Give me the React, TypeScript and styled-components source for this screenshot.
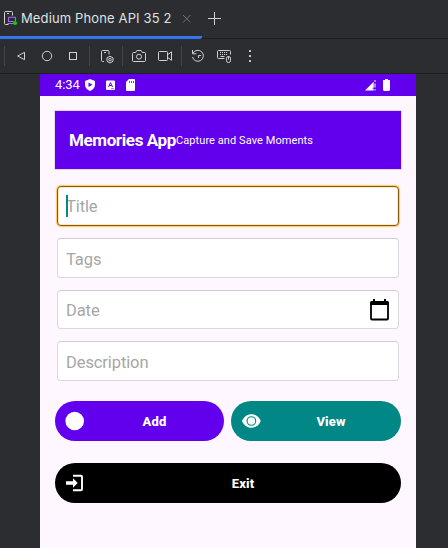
import React from "react";
import styled, { createGlobalStyle } from "styled-components";

const GlobalStyle = createGlobalStyle`
  * { box-sizing: border-box; }
  body { margin: 0; background: #2b2d30; font-family: Roboto, sans-serif; overflow: hidden; }
  button, input { font-family: inherit; }
`;

const Emulator = styled.div`
  width: 448px;
  height: 548px;
  display: flex;
  flex-direction: column;
  background: #2b2d30;
  overflow: hidden;
`;

const TabBar = styled.header`
  height: 39px;
  flex: none;
  display: flex;
  box-shadow: inset 0 -1px #1e1f22;
`;

const Tab = styled.div`
  width: 202px;
  height: 39px;
  padding: 0 0 1px 3px;
  display: flex;
  align-items: center;
  border-bottom: 3px solid #3574f0;
  border-bottom-right-radius: 2px;
`;

const TabTitle = styled.span`
  width: 161px;
  margin-left: 2px;
  font: 400 13px/20px Inter, sans-serif;
  letter-spacing: 0.13px;
  color: #dfe1e5;
  white-space: nowrap;
`;

const NewTab = styled.div`
  padding: 10px 0 0 5px;
`;

const Toolbar = styled.div`
  height: 35px;
  flex: none;
  display: flex;
  align-items: center;
  border-bottom: 1px solid #1e1f22;
`;

const Tool = styled.div`
  width: 26px;
  height: 26px;
  display: grid;
  place-items: center;
`;

const Separator = styled.div<{ $before: number; $after: number }>`
  width: 1px;
  height: 20px;
  margin: 0 ${(p) => p.$after}px 0 ${(p) => p.$before}px;
  background: #43454a;
`;

const Screen = styled.main`
  width: 376px;
  flex: 1;
  margin-left: 40px;
  background: #fef7ff;
`;

const StatusBar = styled.div`
  height: 22px;
  padding: 0 25px 0 15px;
  display: flex;
  align-items: center;
  background: #6200ee;
  color: #fff;
`;

const Clock = styled.span`
  width: 28px;
  font-size: 13px;
  line-height: 22px;
  letter-spacing: -0.1px;
`;

const StatusIcons = styled.div<{ $end?: boolean }>`
  display: flex;
  align-items: center;
  gap: ${(p) => (p.$end ? 5 : 8)}px;
  margin-left: ${(p) => (p.$end ? "auto" : "1px")};
`;

const Content = styled.div`
  padding: 15px 15px 0;
`;

const Banner = styled.section`
  height: 58px;
  padding: 0 0 0 14px;
  display: flex;
  align-items: center;
  background: #6200ee;
  color: #fff;
  box-shadow: 0 0 0 1px rgba(98, 60, 160, 0.16);
`;

const AppName = styled.h1`
  width: 107px;
  margin: 0;
  font-size: 17px;
  font-weight: 700;
  letter-spacing: -0.38px;
  white-space: nowrap;
`;

const Tagline = styled.span`
  font-size: 11px;
  letter-spacing: 0.08px;
  white-space: nowrap;
`;

const Fields = styled.form`
  padding: 17px 2px 0;
  display: grid;
  grid-template-rows: 40px 40px 39px 40px;
  row-gap: 12px;
`;

const Field = styled.label<{ $focused?: boolean; $short?: boolean }>`
  height: ${(p) => (p.$short ? 39 : 40)}px;
  padding: 0 9px 0 8px;
  display: flex;
  align-items: center;
  background: #fff;
  border: 1px solid ${(p) => (p.$focused ? "#865a0c" : "#dbd7de")};
  border-top-color: ${(p) => (p.$focused ? "#865a0c" : "#cfcbd2")};
  border-radius: 4px;
  box-shadow: ${(p) => (p.$focused ? "0 0 1px 1px #ffc860, inset 0 0 0 1px #ffe9c0" : "none")};
`;

const Caret = styled.i`
  width: 2px;
  height: 22px;
  margin-right: -2px;
  background: #008c83;
  z-index: 1;
`;

const Input = styled.input<{ $raised?: boolean }>`
  flex: 1;
  min-width: 0;
  height: 30px;
  padding: ${(p) => (p.$raised ? 0 : 2)}px 0 0;
  border: 0;
  outline: 0;
  background: transparent;
  font-size: 16.5px;
  letter-spacing: -0.1px;
  &::placeholder { color: #a6a6a6; opacity: 1; }
`;

const Actions = styled.div`
  margin-top: 20px;
  display: grid;
  grid-template-columns: 169px 170px;
  gap: 22px 7px;
`;

const ActionButton = styled.button<{ $color: string; $wide?: boolean }>`
  height: 40px;
  grid-column: ${(p) => (p.$wide ? "1 / -1" : "auto")};
  padding: 0 10px;
  display: flex;
  align-items: center;
  border: 0;
  border-radius: 20px;
  background: ${(p) => p.$color};
  color: #fff;
`;

const ActionLabel = styled.span`
  flex: 1;
  padding: 1px 0 0 10px;
  font-size: 13px;
  font-weight: 800;
  letter-spacing: 0.15px;
`;

const stroke = { fill: "none", stroke: "#ced0d6", strokeWidth: 1 };

function App() {
  return (
    <Emulator>
      <GlobalStyle />
      <TabBar>
        <Tab>
          <svg width="16" height="16" viewBox="0 0 16 16" fill="none">
            <path d="M5.5 14.5h-3a1 1 0 0 1-1-1v-11a1 1 0 0 1 1-1h6a1 1 0 0 1 1 1v3" stroke="#ced0d6" />
            <path d="M4 3.5h2" stroke="#ced0d6" />
            <path d="M12.5 11V8a.8.8 0 0 0-.8-.8H6.3a.8.8 0 0 0-.8.8v3.5h5M4.5 13.5h6" stroke="#a571e6" strokeWidth="1.1" />
            <circle cx="12" cy="13" r="2" fill="#00d900" />
          </svg>
          <TabTitle>Medium Phone API 35 2</TabTitle>
          <svg width="10" height="10" viewBox="0 0 10 10" stroke="#6f737a" fill="none">
            <path d="M1 2l7.500 7.500M8.500 2L1 9.500" />
          </svg>
        </Tab>
        <NewTab>
          <svg width="14" height="14" viewBox="0 0 14 14" stroke="#ced0d6" fill="none">
            <path d="M7.5 1v13M1 7.5h13" />
          </svg>
        </NewTab>
      </TabBar>

      <Toolbar>
        <Separator $before={4} $after={3} />
        <Tool><svg width="16" height="16" {...stroke}><path d="M11.5 4.3v7.4L4.6 8z" strokeLinejoin="round" /></svg></Tool>
        <Tool><svg width="16" height="16" {...stroke}><circle cx="8" cy="8" r="4.7" /></svg></Tool>
        <Tool><svg width="16" height="16" {...stroke}><rect x="4.5" y="4.5" width="7" height="7" /></svg></Tool>
        <Separator $before={3} $after={4} />
        <Tool>
          <svg width="16" height="16" {...stroke}>
            <path d="M5 13.5H3.5a1 1 0 0 1-1-1v-9a1 1 0 0 1 1-1H9a1 1 0 0 1 1 1v3M5 4.5h2" />
            <path d="M11 8.2l3 1.7v3.4L11 15l-3-1.7V9.9z" />
            <circle cx="11" cy="11.6" r="1.3" />
          </svg>
        </Tool>
        <Separator $before={2} $after={3} />
        <Tool>
          <svg width="16" height="16" {...stroke}>
            <path d="M2.5 4.5h2.2l1.2-2h4.2l1.2 2h2.2a1 1 0 0 1 1 1v7a1 1 0 0 1-1 1h-11a1 1 0 0 1-1-1v-7a1 1 0 0 1 1-1z" />
            <circle cx="8" cy="8.7" r="2.5" />
          </svg>
        </Tool>
        <Tool>
          <svg width="16" height="16" {...stroke}>
            <rect x="1.5" y="3.5" width="9" height="9" rx="1" />
            <path d="M10.5 6.8l4-3v8.5l-4-3" />
          </svg>
        </Tool>
        <Separator $before={3} $after={3} />
        <Tool>
          <svg width="16" height="16" {...stroke}>
            <path d="M2.5 2v3.8h3.8M3 5.2A5.5 5.5 0 1 1 2.5 9M8.5 10V7.5H11" />
          </svg>
        </Tool>
        <Tool>
          <svg width="16" height="16" {...stroke}>
            <path d="M8.5 10.5h-6a1 1 0 0 1-1-1v-6a1 1 0 0 1 1-1h11a1 1 0 0 1 1 1v3" />
            <path d="M4 4.5h8M4 6.5h8" strokeDasharray="1 1" />
            <path d="M4.5 8.5h4" />
            <rect x="10.5" y="8.5" width="4" height="6" rx="1.8" />
            <path d="M12.5 8.5v3" />
          </svg>
        </Tool>
        <Tool>
          <svg width="16" height="16" fill="#ced0d6">
            <rect x="7" y="2" width="2" height="2" rx=".5" />
            <rect x="7" y="7" width="2" height="2" rx=".5" />
            <rect x="7" y="12" width="2" height="2" rx=".5" />
          </svg>
        </Tool>
      </Toolbar>

      <Screen>
        <StatusBar>
          <Clock>4:34</Clock>
          <StatusIcons>
            <svg width="12" height="14" viewBox="0 0 12 14">
              <path d="M6 1l5 2v3.7c0 2.8-2.1 5.1-5 6.3-2.9-1.2-5-3.5-5-6.3V3z" fill="#fff" />
              <path d="M4.5 4.5l4 2.3-4 2.3z" fill="#6200ee" />
            </svg>
            <svg width="12" height="12" viewBox="0 0 12 12">
              <rect x="2" y="1.5" width="9" height="9.5" rx="1" fill="#fff" />
              <path d="M4.5 8l2-4.5 2 4.5M5.2 6.5h2.6" stroke="#6200ee" fill="none" />
              <path d="M7 9.7h3" stroke="#9b65ee" />
            </svg>
            <svg width="12" height="14" viewBox="0 0 12 14">
              <path d="M5 1h5a1 1 0 0 1 1 1v10a1 1 0 0 1-1 1H3a1 1 0 0 1-1-1V4z" fill="#fff" />
              <path d="M5.5 3v2M7.5 3v2M9.5 3v2" stroke="#6200ee" strokeWidth=".8" />
            </svg>
          </StatusIcons>
          <StatusIcons $end>
            <svg width="12" height="12" viewBox="0 0 12 12">
              <path d="M0 11.500L8.700 2.700v8.800z" fill="#fff" />
              <path d="M10 1v2M10 4.500v4M10 10v1.500" stroke="#fff" strokeWidth="1" />
              <path d="M7 9.300h2v2" stroke="#6200ee" strokeWidth=".5" fill="none" />
            </svg>
            <svg width="9" height="14" viewBox="0 0 9 14" fill="#fff">
              <path d="M3 1h3v1h1.5l.5.5V12l-1 1H2l-1-1V2.500L1.500 2H3z" />
            </svg>
          </StatusIcons>
        </StatusBar>

        <Content>
          <Banner>
            <AppName>Memories App</AppName>
            <Tagline>Capture and Save Moments</Tagline>
          </Banner>

          <Fields>
            <Field $focused><Caret /><Input $raised placeholder="Title" /></Field>
            <Field><Input placeholder="Tags" /></Field>
            <Field $short>
              <Input placeholder="Date" />
              <svg width="19" height="22" viewBox="0 0 19 22">
                <path d="M1 6V19.500Q1 20.500 2 20.500H17Q18 20.500 18 19.500V6" fill="none" stroke="#000" strokeWidth="1.800" />
                <path d="M0 3.500Q0 2 1.500 2H3V0h2v2h9V0h2v2h1.500Q19 2 19 3.500V6H0z" />
              </svg>
            </Field>
            <Field><Input placeholder="Description" /></Field>
          </Fields>

          <Actions>
            <ActionButton $color="#6200ee">
              <svg width="20" height="20"><circle cx="9.7" cy="10" r="9.3" fill="#fff" /></svg>
              <ActionLabel>Add</ActionLabel>
            </ActionButton>
            <ActionButton $color="#018786">
              <svg width="20" height="20" viewBox="0 0 20 20">
                <path d="M1 10C2.700 5.800 6.300 3.200 10.400 3.200s7.700 2.600 9.400 6.800c-1.700 4.200-5.300 6.800-9.400 6.800S2.700 14.200 1 10z" fill="#fff" />
                <circle cx="10.400" cy="10" r="4.300" fill="none" stroke="#018786" strokeWidth="1.100" />
              </svg>
              <ActionLabel>View</ActionLabel>
            </ActionButton>
            <ActionButton $color="#000000" $wide>
              <svg width="20" height="20" viewBox="0 0 20 20" fill="none" stroke="#fff">
                <path d="M8 2.800h8q1 0 1 1v12.500q0 1-1 1H8" strokeWidth="1.900" />
                <path d="M1 8.200h7V5.300l4.700 4.700L8 14.700v-2.900H1z" fill="#fff" stroke="none" />
              </svg>
              <ActionLabel>Exit</ActionLabel>
            </ActionButton>
          </Actions>
        </Content>
      </Screen>
    </Emulator>
  );
}

export default App;
